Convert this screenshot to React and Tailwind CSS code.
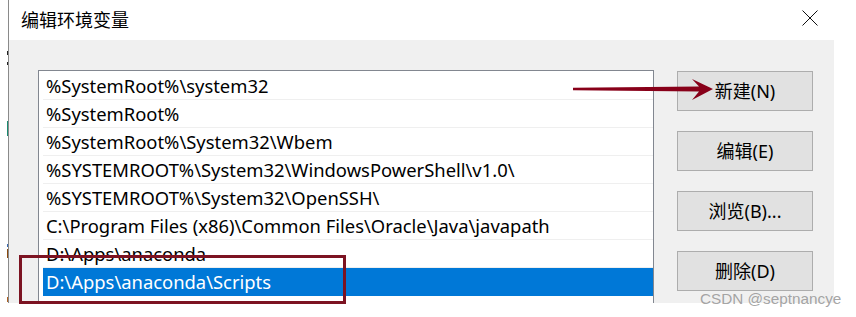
const PATHS = [
  "%SystemRoot%\\system32",
  "%SystemRoot%",
  "%SystemRoot%\\System32\\Wbem",
  "%SYSTEMROOT%\\System32\\WindowsPowerShell\\v1.0\\",
  "%SYSTEMROOT%\\System32\\OpenSSH\\",
  "C:\\Program Files (x86)\\Common Files\\Oracle\\Java\\javapath",
  "D:\\Apps\\anaconda",
  "D:\\Apps\\anaconda\\Scripts",
];

const BUTTONS = ["新建(N)", "编辑(E)", "浏览(B)...", "删除(D)"];

const FONT = {
  fontFamily: '"Noto Sans", "Noto Sans CJK SC", sans-serif',
};

export default function App() {
  return (
    <div
      className="relative flex h-[317px] w-[856px] items-start overflow-hidden bg-white"
      style={FONT}
    >
      {/* bits of the window behind */}
      <div className="flex h-[303px] w-[8px] shrink-0 flex-col items-end">
        <div className="mt-[51px] h-[4px] w-[1px] bg-[#222]" />
        <div className="mt-[7px] h-[3px] w-[1px] bg-[#222]" />
        <div className="mt-[56px] h-[15px] w-[1px] bg-[#1a8a70]" />
        <div className="mt-[108px] h-[3px] w-[1px] bg-[#3a6ab0]" />
        <div className="mt-[2px] h-[9px] w-[1px] bg-[#8a4a10]" />
        <div className="mt-[39px] h-[5px] w-[1px] bg-[#b06020]" />
      </div>

      <div className="flex h-[303px] w-[826px] shrink-0 flex-col border-l border-[#8a8a8a]">
        {/* title bar */}
        <div className="flex h-[40px] shrink-0 items-center justify-between bg-white pl-[12px] pr-[16px]">
          <span className="text-[18px] leading-none text-black">
            编辑环境变量
          </span>
          <svg width="16" height="16" viewBox="0 0 16 16" className="-mt-[4px]">
            <path
              d="M0.5 0.5 L15.5 15.5 M15.5 0.5 L0.5 15.5"
              stroke="#111"
              strokeWidth="1"
              fill="none"
            />
          </svg>
        </div>

        {/* body */}
        <div className="flex flex-1 gap-[23px] overflow-hidden bg-[#f0f0f0] pl-[29px] pr-[21px] pt-[30px]">
          <div className="flex h-[260px] w-[616px] shrink-0 flex-col border border-b-0 border-[#828790] bg-white pt-[1px]">
            {PATHS.map((p, i) => {
              const selected = i === PATHS.length - 1;
              return (
                <div
                  key={p}
                  className={
                    "ml-[4px] flex h-[28px] items-center whitespace-nowrap pl-[3px] text-[18.4px] " +
                    (selected
                      ? "bg-[#0078d7] text-white"
                      : "border-b border-[#efefef] text-black")
                  }
                >
                  {p}
                </div>
              );
            })}
          </div>

          <div className="mt-[1px] flex w-[136px] shrink-0 flex-col gap-[20px]">
            {BUTTONS.map((b) => (
              <div
                key={b}
                className="flex h-[40px] items-center justify-center border border-[#adadad] bg-[#e1e1e1] text-[18px] text-black"
              >
                {b}
              </div>
            ))}
          </div>
        </div>
      </div>

      {/* annotation arrow */}
      <svg
        className="absolute left-0 top-0"
        width="856"
        height="317"
        viewBox="0 0 856 317"
      >
        <path
          d="M573 87.8 L699 86.4 L692 79 L713 89 L692 100 L699 91.6 L573 90.2 Z"
          fill="#880019"
        />
      </svg>

      {/* highlight box */}
      <div className="absolute left-[19px] top-[255px] h-[49px] w-[327px] border-[3px] border-[#7c1322]" />

      <div
        className="absolute left-[700px] top-[290px] text-[15.3px] leading-[17px] text-[#9a9a9a]/90"
        style={{ fontFamily: '"Liberation Sans", Arial, sans-serif' }}
      >
        CSDN @septnancye
      </div>
    </div>
  );
}
